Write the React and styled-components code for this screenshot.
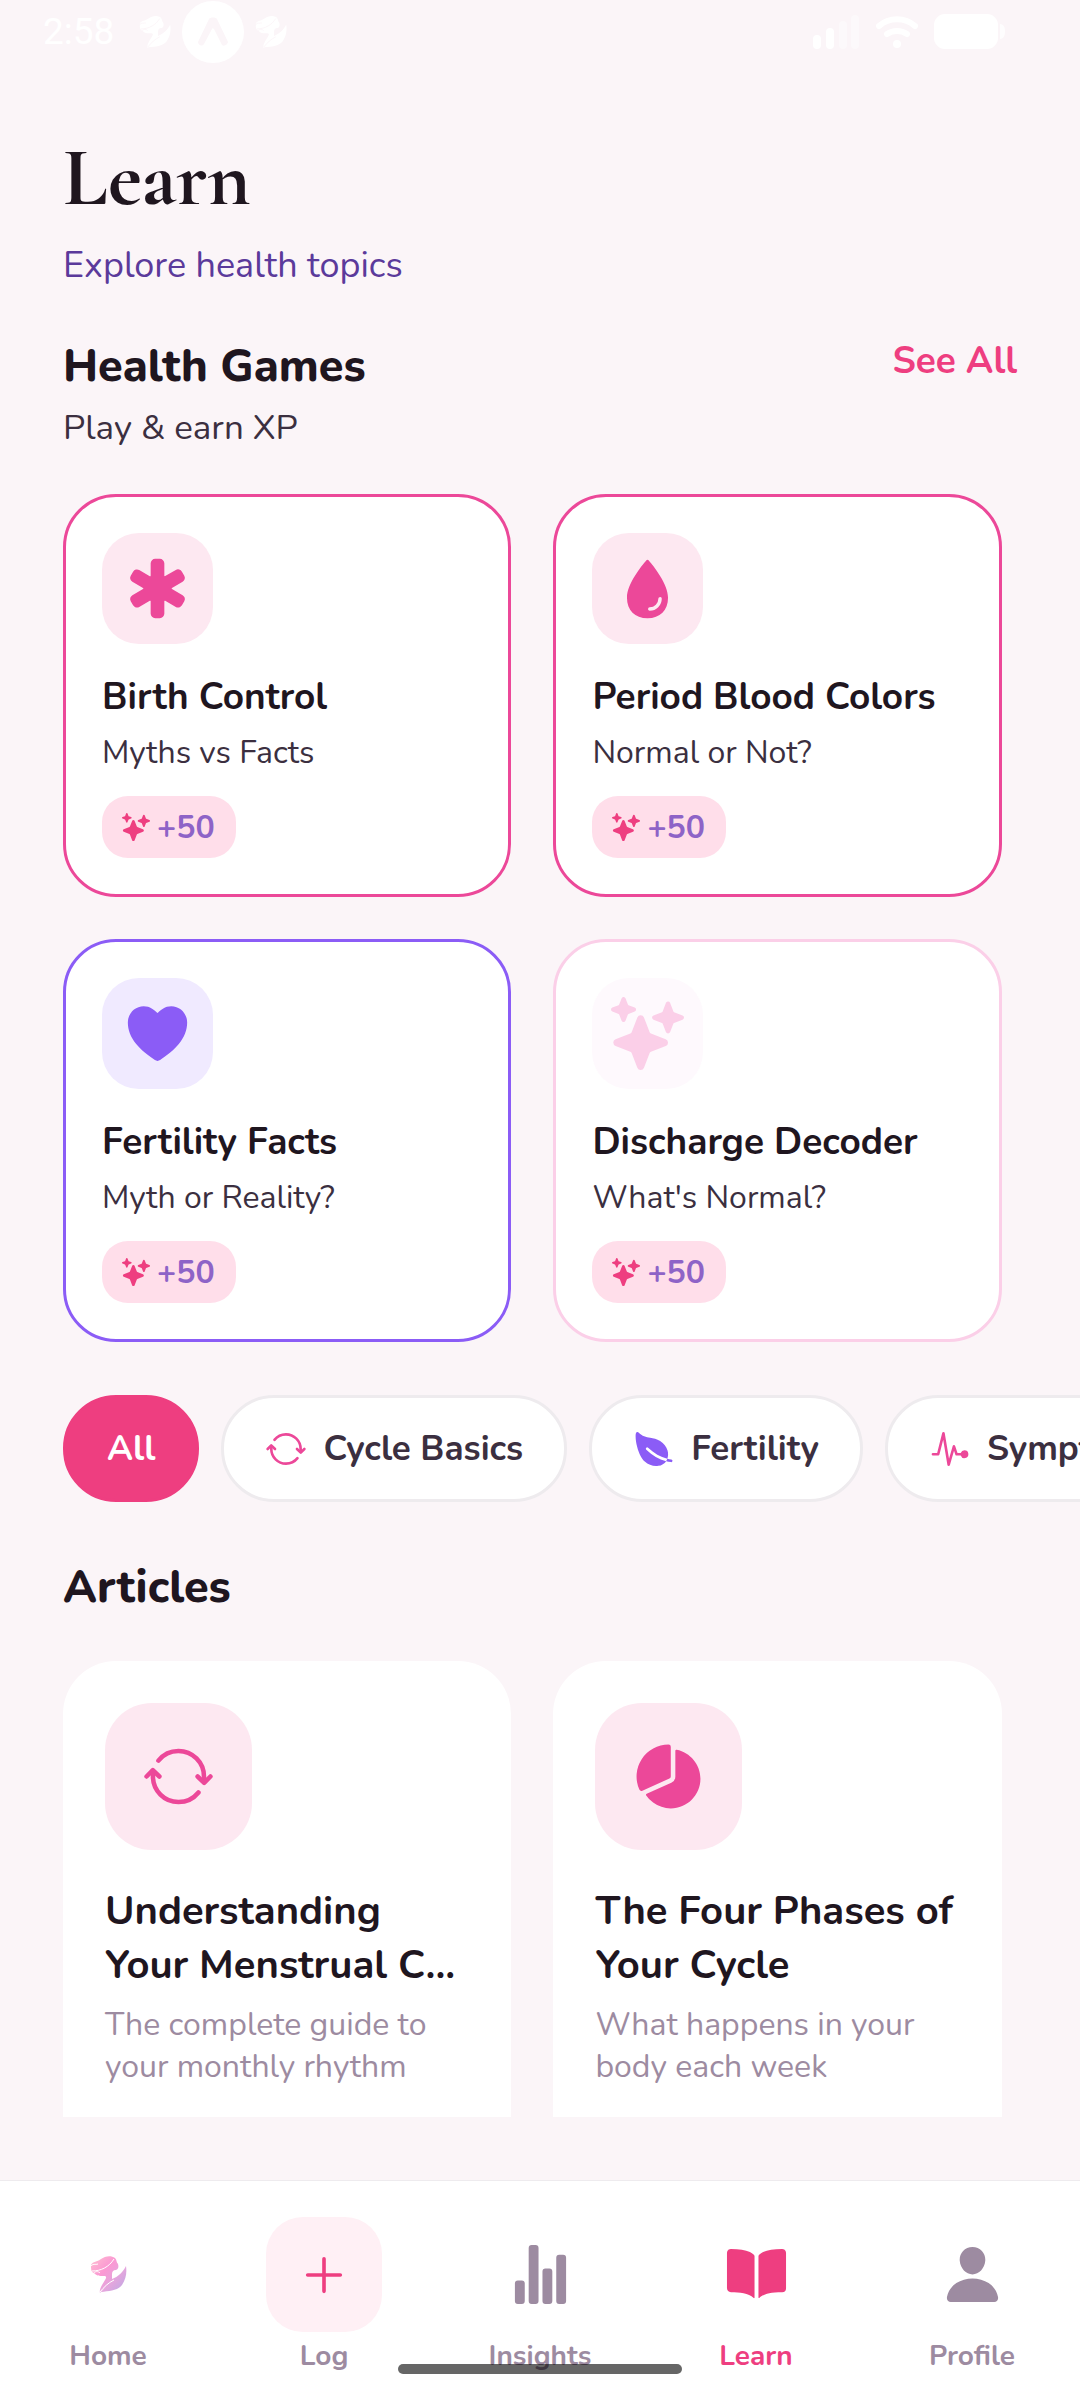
import styled, { createGlobalStyle } from "styled-components";
import {
  IoAdd,
  IoBook,
  IoHeart,
  IoLeaf,
  IoMedical,
  IoPerson,
  IoPieChart,
  IoPulse,
  IoSparkles,
  IoStatsChart,
  IoSyncOutline,
  IoWater,
} from "react-icons/io5";
import { useState } from "react";

const pink = "#ec4899";
const rose = "#ee3e80";
const violet = "#8b5cf6";
const blush = "#fbcfe8";

const games = [
  { title: "Birth Control", text: "Myths vs Facts", icon: IoMedical, color: pink, bg: "#fde8f1" },
  { title: "Period Blood Colors", text: "Normal or Not?", icon: IoWater, color: pink, bg: "#fde8f1" },
  { title: "Fertility Facts", text: "Myth or Reality?", icon: IoHeart, color: violet, bg: "#f0eaff" },
  { title: "Discharge Decoder", text: "What's Normal?", icon: IoSparkles, color: blush, bg: "#fef9fd" },
];

const topics = [
  { name: "All" },
  { name: "Cycle Basics", icon: IoSyncOutline, color: pink },
  { name: "Fertility", icon: IoLeaf, color: violet },
  { name: "Symptoms", icon: IoPulse, color: pink },
];

const articles = [
  {
    title: "Understanding Your Menstrual C...",
    text: "The complete guide to your monthly rhythm",
    icon: IoSyncOutline,
  },
  {
    title: "The Four Phases of Your Cycle",
    text: "What happens in your body each week",
    icon: IoPieChart,
  },
];

const Logo = ({ size, mono }) => (
  <svg width={size} height={size} viewBox="0 0 39 39" aria-hidden="true">
    <defs>
      <linearGradient id="logoFill" x1="0" y1="0" x2="40" y2="38" gradientUnits="userSpaceOnUse">
        <stop offset="0" stopColor="#ffc4d0" />
        <stop offset="0.4" stopColor="#fb98d3" />
        <stop offset="0.65" stopColor="#e3a6dd" />
        <stop offset="1" stopColor="#b3a8e6" />
      </linearGradient>
    </defs>
    <g fill={mono ? "#fff" : "url(#logoFill)"}>
      <path d="M2 10C4 6 8 7 12 4C16 1 22 0 26 3C28 5 27 7 29 9C30 12 29 15 27 15C24 15 23 17 23 19L23 25L11 38C10 34 13 30 16 25C18 22 17 21 15 21C10 21 8 21 5 18C2 17 2 14 2 10Z" />
      <path d="M37 11C38 18 37 24 33 30C28 36 20 36 12 37C16 33 19 28 23 24C29 22 34 17 37 11Z" />
    </g>
    <path
      fill="none"
      stroke={mono ? "#fbf5f8" : "#fff"}
      strokeWidth="1"
      d="M1 12C4 8 6 10 9 9M3 16C12 16 20 12 25 4M4 19C6 16 9 16 11 18M11 37C15 32 19 28 25 25"
    />
  </svg>
);

const SignalIcon = () => (
  <svg width="48" height="36" viewBox="0 0 48 36" fill="#fff" aria-hidden="true">
    <rect x="1" y="21" width="8" height="14" rx="4" />
    <rect x="14" y="14" width="8" height="21" rx="4" />
    <rect x="27" y="7" width="8" height="28" rx="4" opacity="0.4" />
    <rect x="39" y="1" width="8" height="34" rx="4" opacity="0.4" />
  </svg>
);

const WifiIcon = () => (
  <svg
    width="44"
    height="34"
    viewBox="0 0 44 34"
    fill="none"
    stroke="#fff"
    strokeWidth="6"
    strokeLinecap="round"
    aria-hidden="true"
  >
    <path d="M4 11C14 2 30 2 40 11" />
    <path d="M12 19C18 15 26 15 32 19" />
    <circle cx="22" cy="29" r="4" fill="#fff" stroke="none" />
  </svg>
);

const BatteryIcon = () => (
  <svg width="71" height="35" viewBox="0 0 71 35" fill="#fff" aria-hidden="true">
    <rect width="64" height="35" rx="11" />
    <path d="M66 10C70 10 71 14 71 17C71 21 70 25 66 25Z" opacity="0.8" />
  </svg>
);

const tabs = [
  { name: "Home", icon: () => <Logo size={39} /> },
  { name: "Log", icon: IoAdd, boxed: true },
  { name: "Insights", icon: IoStatsChart },
  { name: "Learn", icon: IoBook },
  { name: "Profile", icon: IoPerson },
];

const App = () => {
  const [topic, setTopic] = useState("All");

  return (
    <Screen>
      <GlobalStyle />
      <StatusBar>
        <StatusGroup>
          <Clock>2:58</Clock>
          <Logo size={34} mono />
          <Bubble>
            <svg width="32" height="30" viewBox="0 0 32 30" aria-hidden="true">
              <path
                fill="#fbf5f8"
                d="M12 2C13 0 19 0 20 2L31 25C31 27 27 30 25 28L17 12C16 11 15 11 15 12L7 27C5 30 1 28 1 25Z"
              />
            </svg>
          </Bubble>
          <Logo size={34} mono />
        </StatusGroup>
        <StatusGroup $wide>
          <SignalIcon />
          <WifiIcon />
          <BatteryIcon />
        </StatusGroup>
      </StatusBar>

      <Content>
        <Title>Learn</Title>
        <Tagline>Explore health topics</Tagline>

        <SectionHead>
          <div>
            <SectionTitle>Health Games</SectionTitle>
            <SectionText>Play &amp; earn XP</SectionText>
          </div>
          <SeeAll href="#games">See All</SeeAll>
        </SectionHead>

        <CardGrid id="games">
          {games.map((game) => (
            <GameCard key={game.title} $color={game.color}>
              <IconBox $bg={game.bg} $color={game.color}>
                <game.icon size={73} />
              </IconBox>
              <GameTitle>{game.title}</GameTitle>
              <GameText>{game.text}</GameText>
              <Badge>
                <IoSparkles size={28} color={rose} />
                +50
              </Badge>
            </GameCard>
          ))}
        </CardGrid>

        <Chips>
          {topics.map((t) => (
            <Chip key={t.name} $active={topic === t.name} onClick={() => setTopic(t.name)}>
              {t.icon && <t.icon size={42} color={t.color} />}
              {t.name}
            </Chip>
          ))}
        </Chips>

        <SectionTitle>Articles</SectionTitle>
        <ArticleGrid>
          {articles.map((article) => (
            <ArticleCard key={article.title}>
              <IconBox $large $bg="#fde8f1" $color={pink}>
                <article.icon size={73} />
              </IconBox>
              <ArticleTitle>{article.title}</ArticleTitle>
              <ArticleText>{article.text}</ArticleText>
            </ArticleCard>
          ))}
        </ArticleGrid>
      </Content>

      <TabBar>
        {tabs.map((tab) => (
          <Tab key={tab.name} href={`#${tab.name.toLowerCase()}`} $active={tab.name === "Learn"}>
            <TabIcon $boxed={tab.boxed}>
              <tab.icon size={tab.boxed ? 58 : 63} />
            </TabIcon>
            {tab.name}
          </Tab>
        ))}
        <HomeIndicator />
      </TabBar>
    </Screen>
  );
};

export default App;

const GlobalStyle = createGlobalStyle`
  * {
    box-sizing: border-box;
  }
  body {
    margin: 0;
    background: #fbf5f8;
  }
  h1, h2, h3, p {
    margin: 0;
  }
  svg {
    display: block;
    flex-shrink: 0;
  }
`;

const Screen = styled.div`
  display: flex;
  flex-direction: column;
  height: 100vh;
  font-family: Nunito, Lato, sans-serif;
  color: #1f161f;
  background: #fbf5f8;
`;

const StatusBar = styled.header`
  display: flex;
  flex-shrink: 0;
  justify-content: space-between;
  padding: 0 75px 0 43px;
  height: 63px;
`;

const StatusGroup = styled.div`
  display: flex;
  align-items: center;
  gap: ${(props) => (props.$wide ? 15 : 10)}px;
`;

const Clock = styled.span`
  margin-right: 14px;
  font-family: Roboto, sans-serif;
  font-size: 37px;
  line-height: 40px;
  color: #fff;
`;

const Bubble = styled.span`
  display: flex;
  align-items: center;
  justify-content: center;
  width: 62px;
  height: 62px;
  border-radius: 50%;
  background: #fff;
`;

const Content = styled.main`
  flex: 1;
  min-height: 0;
  margin-bottom: 63px;
  padding: 67px 63px 0;
  overflow: hidden auto;
  scrollbar-width: none;
`;

const Title = styled.h1`
  font-family: "Cormorant Garamond", "Liberation Serif", serif;
  font-size: 82px;
  font-weight: 700;
  line-height: 96px;
`;

const Tagline = styled.p`
  margin-top: 15px;
  font-size: 36px;
  line-height: 50px;
  color: #5b3a9b;
`;

const SectionHead = styled.div`
  display: flex;
  align-items: flex-start;
  justify-content: space-between;
  margin: 45px 0 36px;
`;

const SectionTitle = styled.h2`
  font-size: 45px;
  font-weight: 800;
  line-height: 62px;
`;

const SectionText = styled.p`
  font-size: 35px;
  line-height: 60px;
  color: #3b2f40;
`;

const SeeAll = styled.a`
  font-size: 37px;
  font-weight: 700;
  line-height: 50px;
  color: ${rose};
  text-decoration: none;
`;

const CardGrid = styled.div`
  display: grid;
  grid-template-columns: 47% 47%;
  gap: 42px;
`;

const GameCard = styled.article`
  padding: 36px;
  border: 3px solid ${(props) => props.$color};
  border-radius: 53px;
  background: #fff;
`;

const IconBox = styled.div`
  display: flex;
  align-items: center;
  justify-content: center;
  width: ${(props) => (props.$large ? 147 : 111)}px;
  height: ${(props) => (props.$large ? 147 : 111)}px;
  border-radius: ${(props) => (props.$large ? 47 : 37)}px;
  background: ${(props) => props.$bg};
  color: ${(props) => props.$color};
`;

const GameTitle = styled.h3`
  margin-top: 28px;
  font-size: 37px;
  font-weight: 700;
  line-height: 50px;
`;

const GameText = styled.p`
  margin-top: 10px;
  font-size: 32px;
  line-height: 42px;
  color: #3b2f40;
`;

const Badge = styled.div`
  display: inline-flex;
  align-items: center;
  gap: 7px;
  margin-top: 22px;
  padding: 0 21px 0 20px;
  height: 62px;
  border-radius: 26px;
  background: #ffdeea;
  font-size: 32px;
  font-weight: 700;
  color: #8e63c7;
  vertical-align: top;
`;

const Chips = styled.div`
  display: flex;
  gap: 22px;
  margin: 53px -63px 55px 0;
  overflow-x: auto;
  scrollbar-width: none;
`;

const Chip = styled.button`
  display: flex;
  flex-shrink: 0;
  align-items: center;
  gap: 16px;
  padding: 0 41px;
  height: 107px;
  border: 3px solid ${(props) => (props.$active ? rose : "#eeebee")};
  border-radius: 53px;
  background: ${(props) => (props.$active ? rose : "#fff")};
  color: ${(props) => (props.$active ? "#fff" : "#3b2f40")};
  font-family: inherit;
  font-size: 35px;
  font-weight: 700;
`;

const ArticleGrid = styled(CardGrid)`
  margin-top: 42px;
`;

const ArticleCard = styled.article`
  padding: 42px 42px 90px;
  border-radius: 53px;
  background: #fff;
`;

const ArticleTitle = styled.h3`
  margin-top: 34px;
  font-size: 40px;
  font-weight: 700;
  line-height: 54px;
`;

const ArticleText = styled.p`
  margin-top: 12px;
  font-size: 32px;
  line-height: 42px;
  color: #9d8ba1;
`;

const TabBar = styled.nav`
  position: relative;
  display: flex;
  flex-shrink: 0;
  padding: 36px 0 24px;
  border-top: 1px solid #eeebee;
  background: #fff;
`;

const Tab = styled.a`
  display: flex;
  flex: 1;
  flex-direction: column;
  align-items: center;
  gap: 4px;
  color: ${(props) => (props.$active ? rose : "#9d8ba1")};
  font-size: 28px;
  font-weight: 700;
  line-height: 40px;
  text-decoration: none;
`;

const TabIcon = styled.span`
  display: flex;
  align-items: center;
  justify-content: center;
  width: 116px;
  height: 115px;
  border-radius: 37px;
  background: ${(props) => (props.$boxed ? "#fff0f5" : "none")};
  color: ${(props) => (props.$boxed ? rose : "inherit")};
`;

const HomeIndicator = styled.div`
  position: absolute;
  bottom: 26px;
  left: 50%;
  width: 284px;
  height: 10px;
  border-radius: 5px;
  background: rgba(0, 0, 0, 0.6);
  transform: translateX(-50%);
`;
